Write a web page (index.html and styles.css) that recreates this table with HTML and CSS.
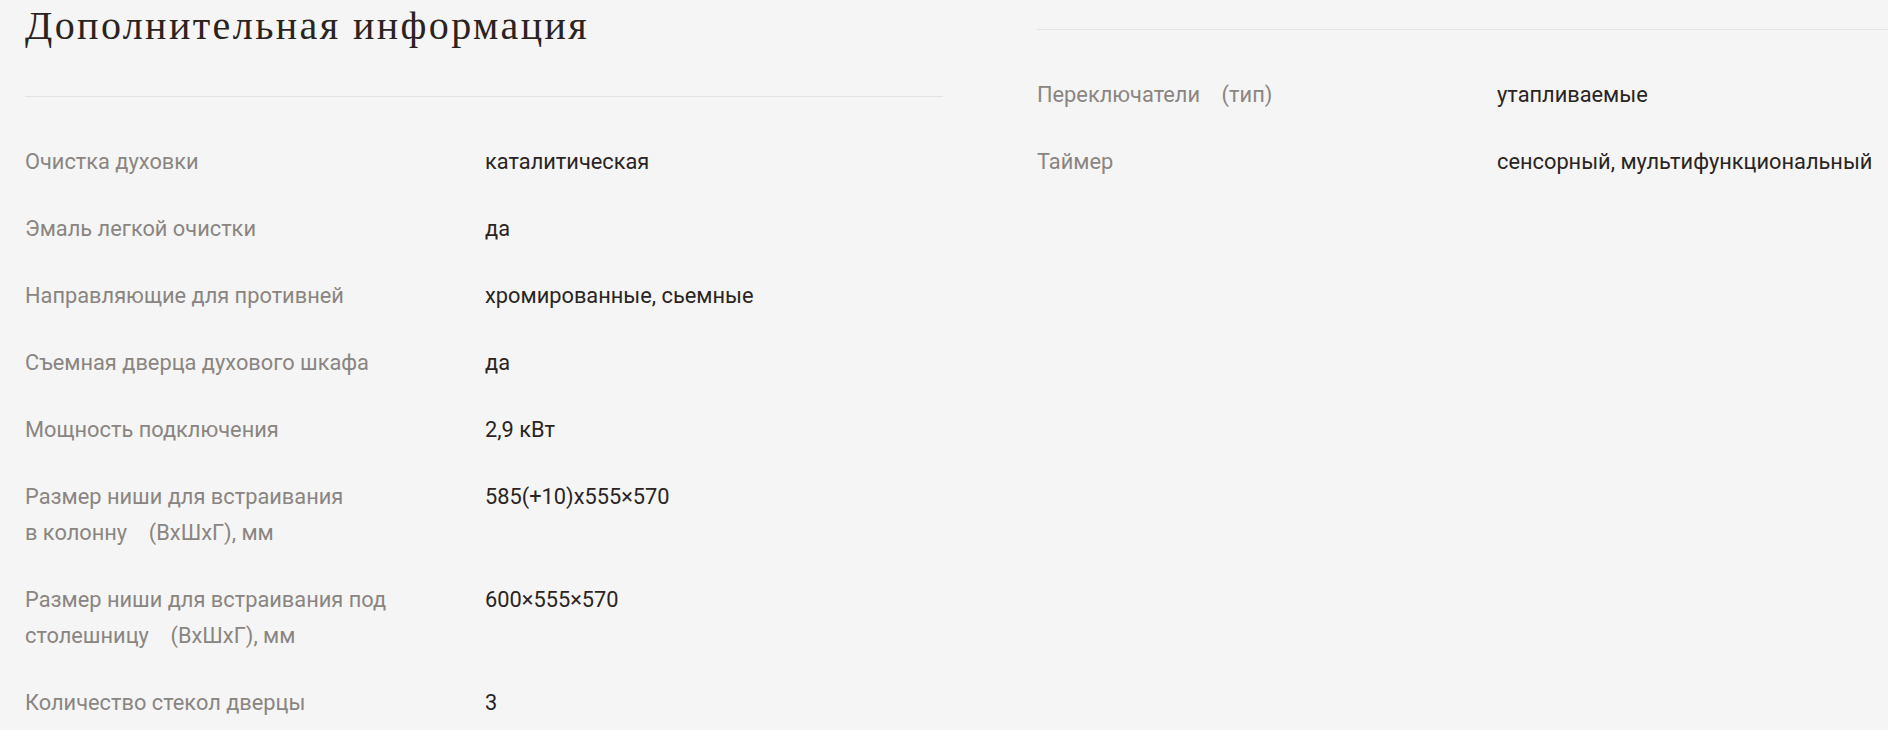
FILE: index.html
```html
<!DOCTYPE html>
<html lang="ru">
<head>
<meta charset="utf-8">
<link rel="stylesheet" href="styles.css">
</head>
<body>
<section class="specs">
  <div class="col">
    <h2 class="title">Дополнительная информация</h2>
    <div class="divider"></div>
    <dl class="list">
      <div class="row"><dt>Очистка духовки</dt><dd>каталитическая</dd></div>
      <div class="row"><dt>Эмаль легкой очистки</dt><dd>да</dd></div>
      <div class="row"><dt>Направляющие для противней</dt><dd>хромированные, сьемные</dd></div>
      <div class="row"><dt>Съемная дверца духового шкафа</dt><dd>да</dd></div>
      <div class="row"><dt>Мощность подключения</dt><dd>2,9 кВт</dd></div>
      <div class="row"><dt>Размер ниши для встраивания<br>в колонну&nbsp;&nbsp;&nbsp;&nbsp;(ВхШхГ), мм</dt><dd>585(+10)x555×570</dd></div>
      <div class="row"><dt>Размер ниши для встраивания под<br>столешницу&nbsp;&nbsp;&nbsp;&nbsp;(ВхШхГ), мм</dt><dd>600×555×570</dd></div>
      <div class="row"><dt>Количество стекол дверцы</dt><dd>3</dd></div>
    </dl>
  </div>
  <div class="col col-right">
    <div class="divider"></div>
    <dl class="list">
      <div class="row"><dt>Переключатели&nbsp;&nbsp;&nbsp;&nbsp;(тип)</dt><dd>утапливаемые</dd></div>
      <div class="row"><dt>Таймер</dt><dd>сенсорный, мультифункциональный</dd></div>
    </dl>
  </div>
</section>
</body>
</html>
```

FILE: styles.css
```css
html, body {
  margin: 0;
  padding: 0;
  background: #f5f5f5;
  overflow: hidden;
}
body {
  width: 1888px;
  height: 730px;
}
.specs {
  display: grid;
  grid-template-columns: 918px 918px;
  column-gap: 94px;
  padding-left: 25px;
}
.title {
  margin: 0;
  padding-top: 4px;
  height: 96px;
  box-sizing: border-box;
  font-family: "Liberation Serif", serif;
  font-weight: 400;
  font-size: 40px;
  letter-spacing: 2.4px;
  line-height: 44px;
  color: #2a2320;
}
.col-right {
  padding-top: 29px;
}
.divider {
  height: 1px;
  background: #e3e3e3;
}
.list {
  margin: 0;
  padding-top: 47px;
}
.row {
  display: grid;
  grid-template-columns: 460px 1fr;
  padding-bottom: 31px;
}
.row dt, .row dd {
  margin: 0;
  font-family: Roboto, "Liberation Sans", sans-serif;
  font-size: 21.8px;
  line-height: 36px;
}
.row dt {
  color: #8a8581;
}
.row dd {
  color: #2a2422;
  white-space: nowrap;
}
```
